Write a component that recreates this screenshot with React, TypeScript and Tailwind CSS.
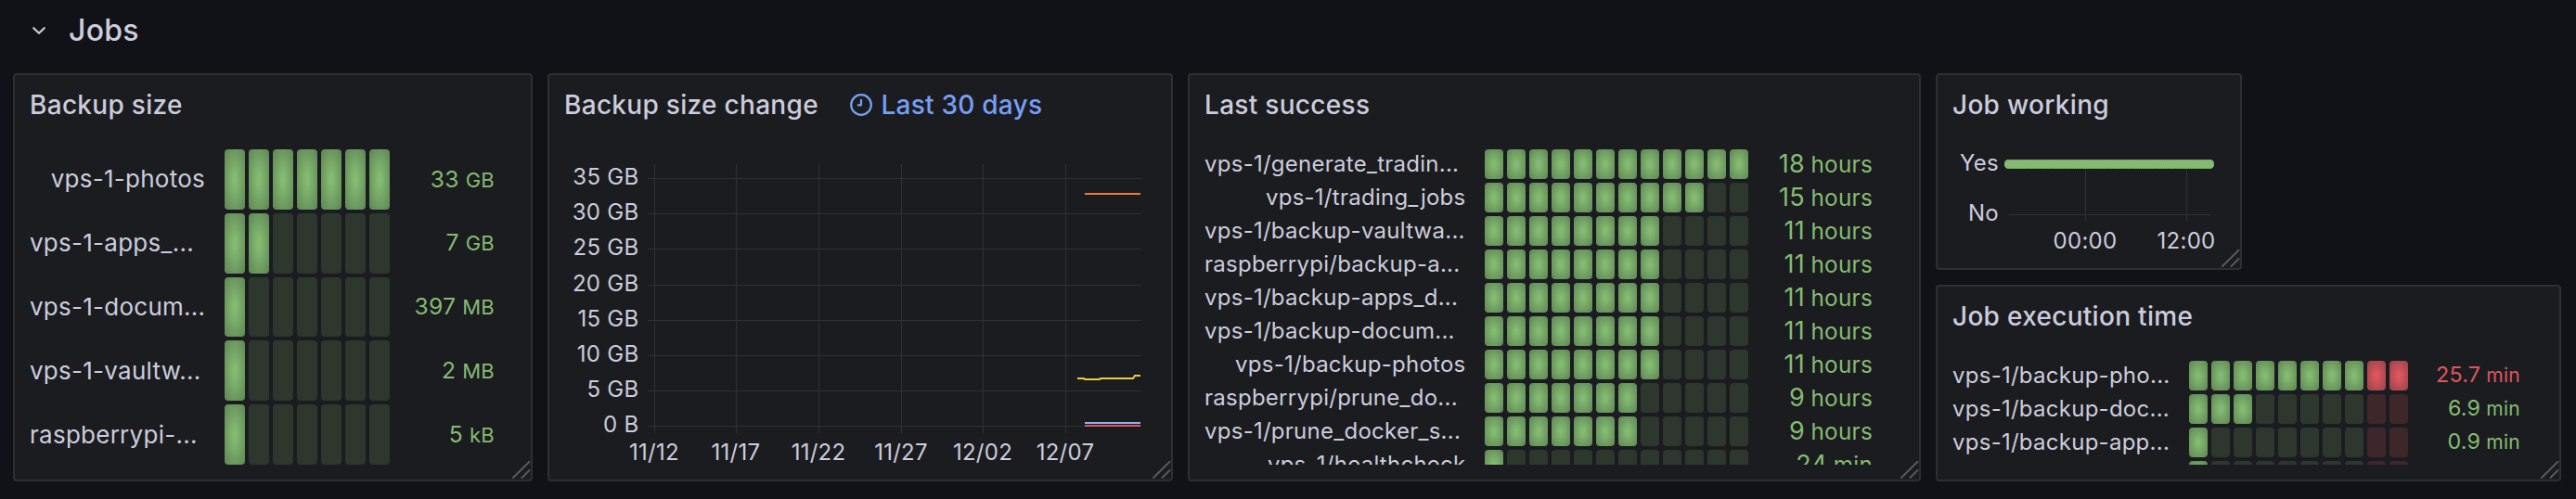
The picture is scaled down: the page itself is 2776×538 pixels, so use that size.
import React from "react";

type Row = { label: string; lit: number; value: string; unit: string; hot?: boolean };

const GREEN = "bg-[radial-gradient(#84bb71_10%,#5e8555)]";
const GREEN_OFF = "bg-[#2d372e]";
const RED = "bg-[radial-gradient(#de565f_10%,#96434b)]";
const RED_OFF = "bg-[#3e272b]";

const sizes: Row[] = [
  { label: "vps-1-photos", lit: 7, value: "33", unit: "GB" },
  { label: "vps-1-apps_...", lit: 2, value: "7", unit: "GB" },
  { label: "vps-1-docum...", lit: 1, value: "397", unit: "MB" },
  { label: "vps-1-vaultw...", lit: 1, value: "2", unit: "MB" },
  { label: "raspberrypi-...", lit: 1, value: "5", unit: "kB" },
];

const successes: Row[] = [
  { label: "vps-1/generate_tradin...", lit: 12, value: "18", unit: "hours" },
  { label: "vps-1/trading_jobs", lit: 10, value: "15", unit: "hours" },
  { label: "vps-1/backup-vaultwa...", lit: 8, value: "11", unit: "hours" },
  { label: "raspberrypi/backup-a...", lit: 8, value: "11", unit: "hours" },
  { label: "vps-1/backup-apps_d...", lit: 8, value: "11", unit: "hours" },
  { label: "vps-1/backup-docum...", lit: 8, value: "11", unit: "hours" },
  { label: "vps-1/backup-photos", lit: 8, value: "11", unit: "hours" },
  { label: "raspberrypi/prune_do...", lit: 7, value: "9", unit: "hours" },
  { label: "vps-1/prune_docker_s...", lit: 7, value: "9", unit: "hours" },
  { label: "vps-1/healthcheck", lit: 1, value: "24", unit: "min" },
];

const executions: Row[] = [
  { label: "vps-1/backup-pho...", lit: 10, value: "25.7", unit: "min", hot: true },
  { label: "vps-1/backup-doc...", lit: 3, value: "6.9", unit: "min" },
  { label: "vps-1/backup-app...", lit: 1, value: "0.9", unit: "min" },
  { label: "", lit: 1, value: "", unit: "" },
];

function Panel({
  title,
  className,
  extra,
  children,
}: {
  title: string;
  className: string;
  extra?: React.ReactNode;
  children: React.ReactNode;
}) {
  return (
    <section
      className={`relative flex shrink-0 flex-col rounded-[4px] border-2 border-[#2e2f33] bg-[#1b1c20] px-4 pb-4 ${className}`}
    >
      <header className="flex h-16 shrink-0 items-center">
        <h2 className="text-[28px] leading-none font-medium tracking-[0.3px]">{title}</h2>
        {extra}
      </header>
      <div className="mt-4 min-h-0 flex-1 overflow-hidden">{children}</div>
      <svg
        className="absolute right-0 bottom-0 h-5 w-5"
        viewBox="0 0 20 20"
        fill="none"
        stroke="#58595d"
        strokeWidth="2"
        strokeLinecap="round"
      >
        <path d="M1 18 18.500 .8M10.500 18l8-8" />
      </svg>
    </section>
  );
}

function Gauge({
  rows,
  segments,
  redFrom = 99,
  rowClass,
  labelClass,
  segClass,
  valueClass,
  unitClass,
}: {
  rows: Row[];
  segments: number;
  redFrom?: number;
  rowClass: string;
  labelClass: string;
  segClass: string;
  valueClass: string;
  unitClass: string;
}) {
  return (
    <div className="flex h-full flex-col gap-1">
      {rows.map((row, r) => (
        <div key={r} className={`flex items-center ${rowClass}`}>
          <div
            className={`shrink-0 whitespace-nowrap ${row.label.endsWith("...") ? "text-left" : "text-right"} ${labelClass}`}
          >
            {row.label}
          </div>
          <div className="flex h-full shrink-0 gap-1">
            {Array.from({ length: segments }, (_, i) => (
              <div
                key={i}
                className={`h-full rounded-[4px] ${segClass} ${
                  i < row.lit ? (i >= redFrom ? RED : GREEN) : i >= redFrom ? RED_OFF : GREEN_OFF
                }`}
              />
            ))}
          </div>
          <div
            className={`flex flex-1 items-baseline justify-end leading-none whitespace-nowrap ${
              row.hot ? "text-[#dd565e]" : "text-[#85bb71]"
            } ${valueClass}`}
          >
            {row.value}
            <span className={unitClass}>{row.unit}</span>
          </div>
        </div>
      ))}
    </div>
  );
}

function SizeChart() {
  const ys = [192.5, 230.5, 268.5, 307.5, 345.5, 383.5, 421.5, 459.5];
  const names = ["35 GB", "30 GB", "25 GB", "20 GB", "15 GB", "10 GB", "5 GB", "0 B"];
  const xs = [705.5, 793.5, 882.5, 971.5, 1059.5, 1148.5];
  const dates = ["11/12", "11/17", "11/22", "11/27", "12/02", "12/07"];
  return (
    <svg className="block h-[340px] w-[638px]" viewBox="608 161 638 340" fill="none">
      <g stroke="#303135">
        {ys.map((y) => (
          <path key={y} d={`M698 ${y}H1230`} />
        ))}
        {xs.map((x) => (
          <path key={x} d={`M${x} 177V467`} />
        ))}
      </g>
      <g fill="#ccccdc" fontSize="24">
        {names.map((n, i) => (
          <text key={n} x="688.4" y={ys[i] + 6.5} textAnchor="end">
            {n}
          </text>
        ))}
        {dates.map((d, i) => (
          <text key={d} x={xs[i] - 0.5} y="496" textAnchor="middle">
            {d}
          </text>
        ))}
      </g>
      <g strokeWidth="2">
        <path stroke="#eb7b2f" d="M1169 209H1229" />
        <path stroke="#eccb47" d="M1161 408H1168L1169 409H1185L1186 408H1221L1223 405H1229" />
        <path stroke="#8fb1f0" d="M1169 456H1229" />
        <path stroke="#dd565e" d="M1169 459H1229" />
      </g>
    </svg>
  );
}

function WorkingChart() {
  return (
    <svg className="block h-[112px] w-[294px]" viewBox="2104 161 294 112" fill="none">
      <path stroke="#303135" d="M2164.500 231.500H2382.500M2247.500 182V239M2356.500 182V239" />
      <rect x="2160" y="172" width="226" height="10" rx="4.500" fill="#85bb71" />
      <path stroke="#6a975b" strokeDasharray="1 1" d="M2164 172.500H2382M2164 181.500H2382" />
      <g fill="#ccccdc" fontSize="24">
        <text x="2154" y="184" textAnchor="end">
          Yes
        </text>
        <text x="2154" y="238" textAnchor="end">
          No
        </text>
        <text x="2247" y="268" textAnchor="middle">
          00:00
        </text>
        <text x="2356" y="268" textAnchor="middle">
          12:00
        </text>
      </g>
    </svg>
  );
}

export default function App() {
  return (
    <main className="h-[538px] w-[2776px] overflow-hidden bg-[#111217] font-['Inter',sans-serif] tracking-[0.26px] text-[#ccccdc]">
      <div className="flex h-[79px] items-start gap-6 pt-[17px] pl-[34px]">
        <svg
          className="mt-[9px] h-4 w-4"
          viewBox="0 0 16 16"
          fill="none"
          stroke="#ccccdc"
          strokeWidth="2.200"
          strokeLinecap="round"
          strokeLinejoin="round"
        >
          <path d="m2.200 4.200 5.800 5.600 5.800-5.600" />
        </svg>
        <h1 className="text-[32px] leading-8 font-medium">Jobs</h1>
      </div>
      <div className="flex gap-4 pl-[14px]">
        <Panel title="Backup size" className="h-[440px] w-[560px]">
          <Gauge
            rows={sizes}
            segments={7}
            rowClass="min-h-0 flex-1"
            labelClass="w-[210px] pr-[21px] pb-px text-[26px]"
            segClass="w-[22px]"
            valueClass="pr-[23px] pb-px text-[24.6px]"
            unitClass="ml-[7px] text-[22px]"
          />
        </Panel>
        <Panel
          title="Backup size change"
          className="h-[440px] w-[674px]"
          extra={
            <div className="ml-[34px] flex items-center gap-[9.5px] text-[28px] leading-none font-medium tracking-[0.25px] text-[#779ff5]">
              <svg
                className="h-6 w-6"
                viewBox="0 0 24 24"
                fill="none"
                stroke="currentColor"
                strokeWidth="2.200"
                strokeLinecap="round"
                strokeLinejoin="round"
              >
                <circle cx="12" cy="12" r="10.800" />
                <path d="M12 6.800V12.300H8.800" />
              </svg>
              Last 30 days
            </div>
          }
        >
          <SizeChart />
        </Panel>
        <Panel title="Last success" className="h-[440px] w-[790px]">
          <Gauge
            rows={successes}
            segments={12}
            rowClass="h-8 shrink-0"
            labelClass="w-[302px] pr-[20.5px] pb-px text-[24px]"
            segClass="w-5"
            valueClass="pr-[34px] pb-px text-[27px]"
            unitClass="ml-[6.5px] text-[24.3px]"
          />
        </Panel>
        <div className="flex flex-col gap-4">
          <Panel title="Job working" className="h-[212px] w-[330px]">
            <WorkingChart />
          </Panel>
          <Panel title="Job execution time" className="h-[212px] w-[674px]">
            <Gauge
              rows={executions}
              segments={10}
              redFrom={8}
              rowClass="h-8 shrink-0"
              labelClass="w-[255px] pr-[21px] pb-px text-[24px]"
              segClass="w-5"
              valueClass="pr-[26px] pb-0.5 text-[23.3px]"
              unitClass="ml-1.5 text-[21px]"
            />
          </Panel>
        </div>
      </div>
    </main>
  );
}
